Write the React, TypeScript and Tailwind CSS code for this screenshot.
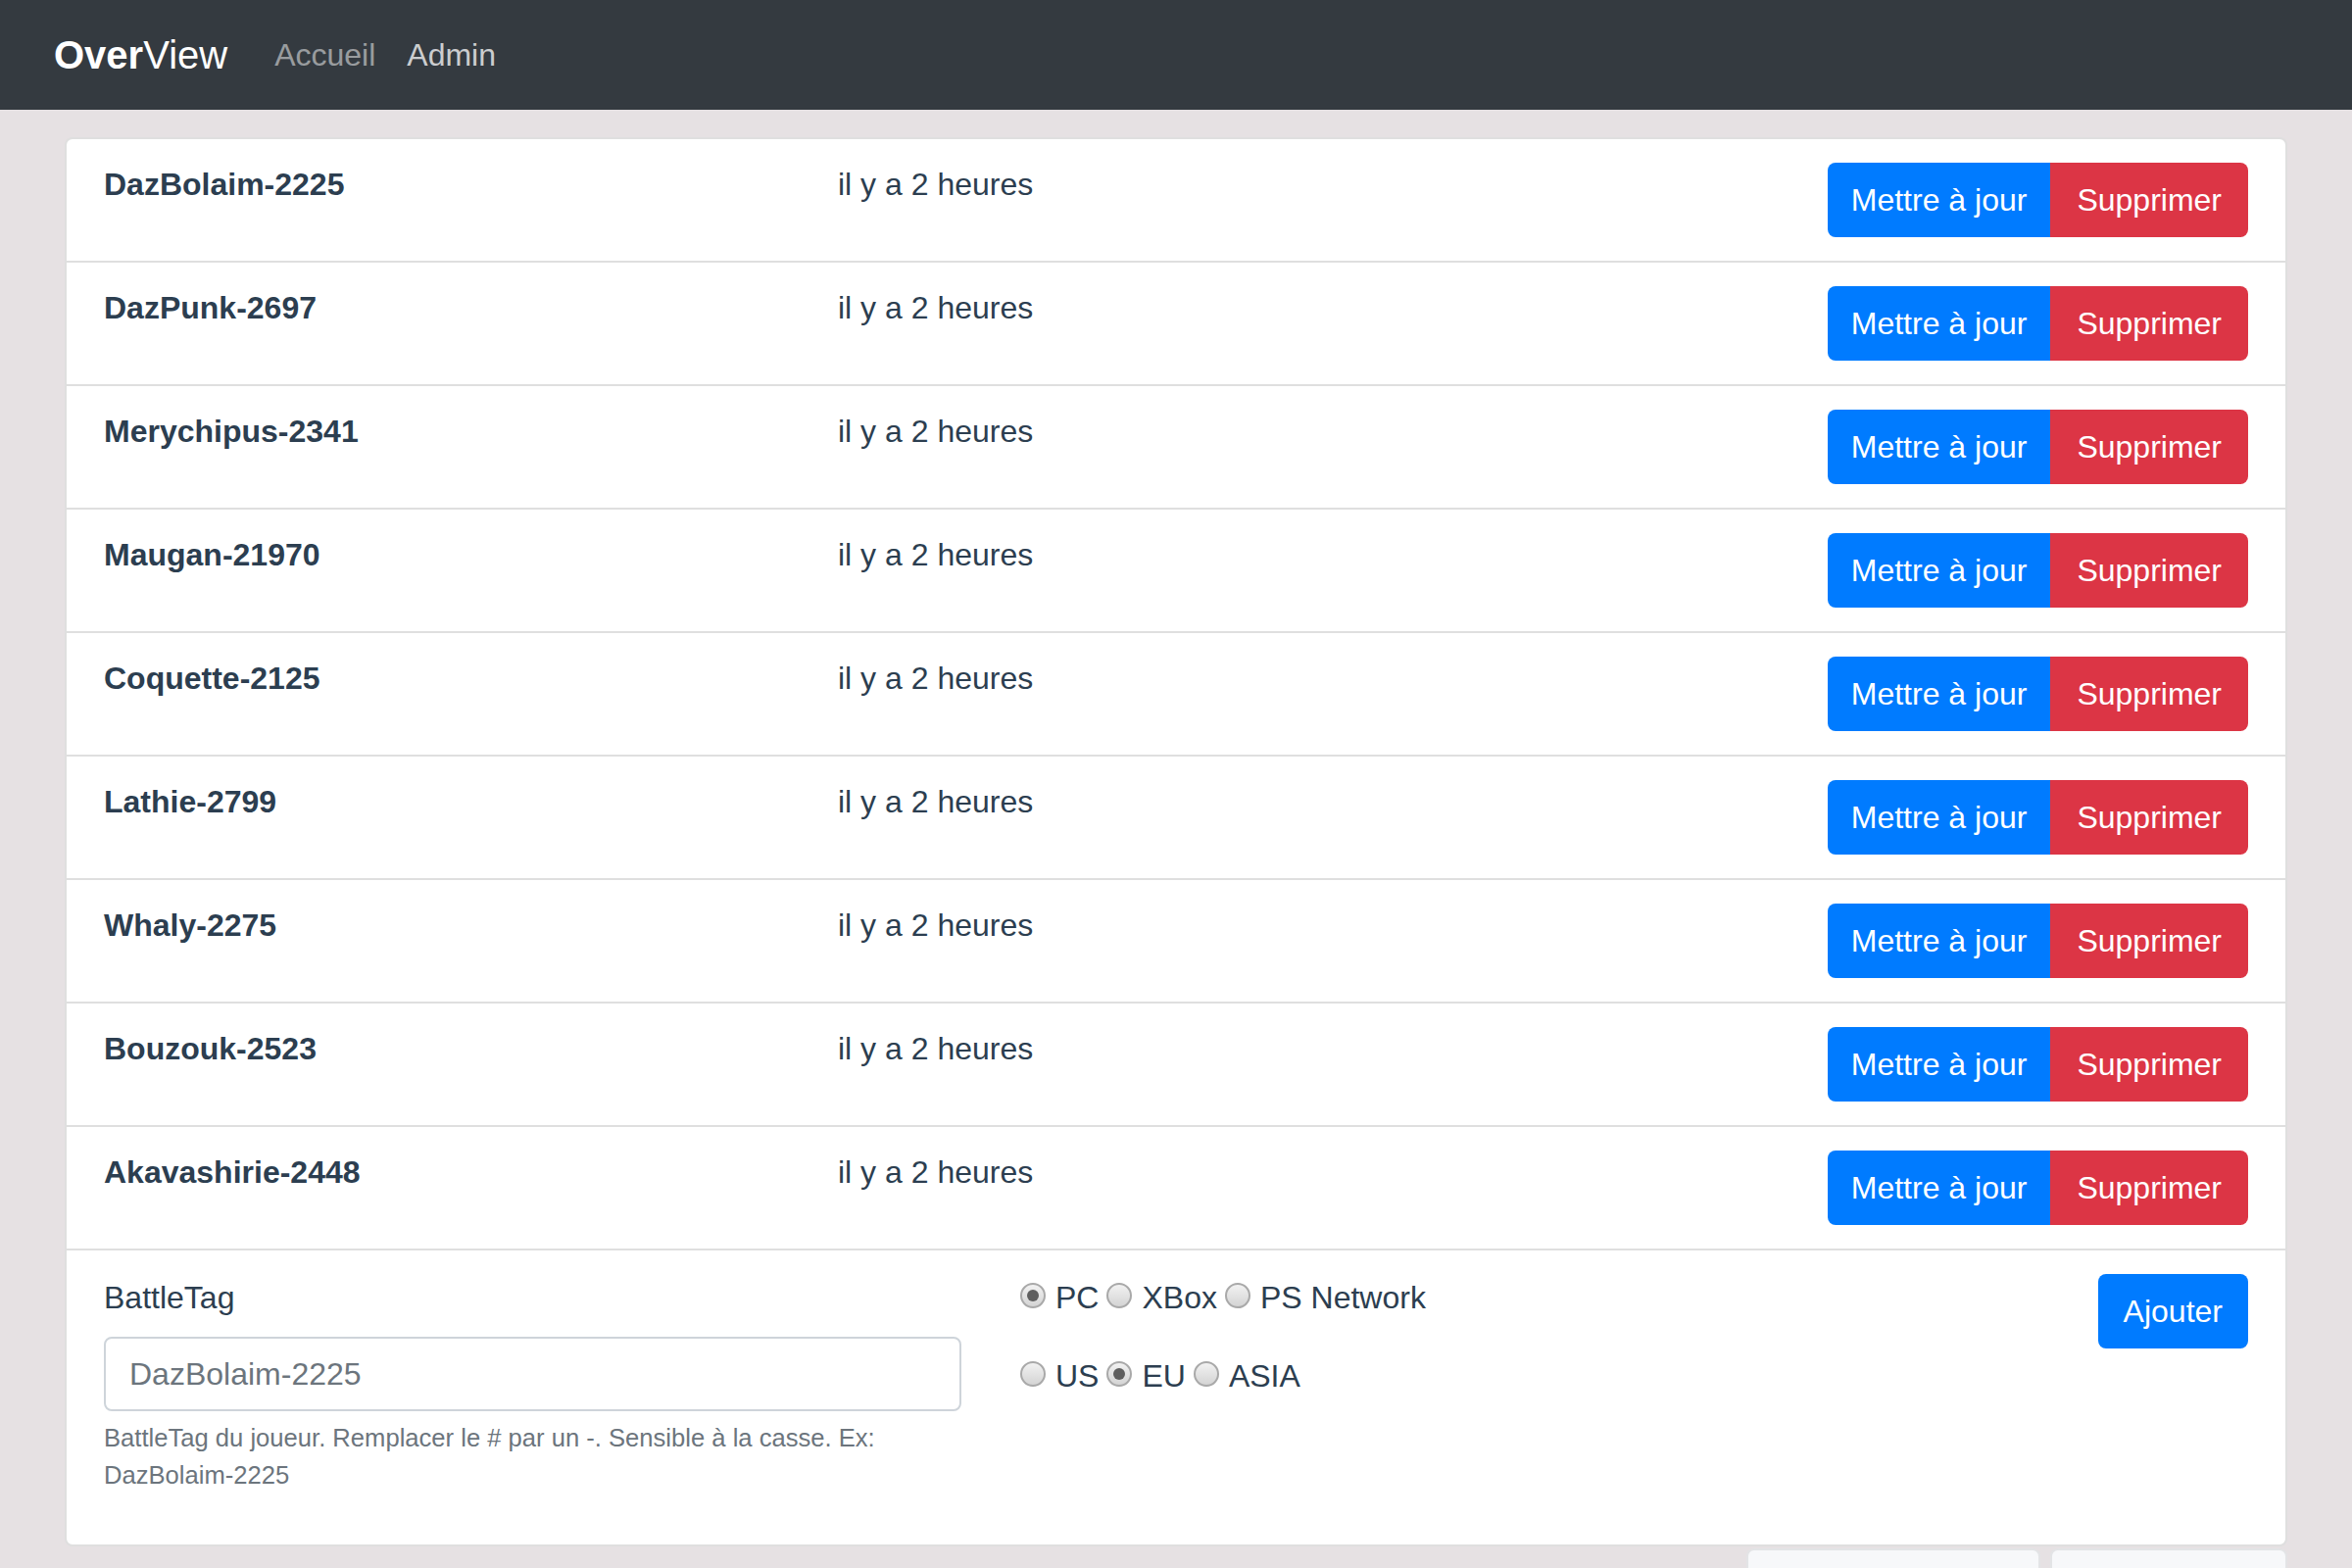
import { useState } from 'react';

const players = [
  'DazBolaim-2225',
  'DazPunk-2697',
  'Merychipus-2341',
  'Maugan-21970',
  'Coquette-2125',
  'Lathie-2799',
  'Whaly-2275',
  'Bouzouk-2523',
  'Akavashirie-2448',
];

function Radio({ checked, label, onClick }: { checked: boolean; label: string; onClick: () => void }) {
  return (
    <button type="button" onClick={onClick} className="flex items-center mr-[8px]">
      <span className="flex h-[26px] w-[26px] items-center justify-center rounded-full border-2 border-[#a9a9a9] bg-linear-to-b from-[#f2f2f2] to-[#d4d4d4] -mt-[4px]">
        {checked && <span className="h-[12px] w-[12px] rounded-full bg-[#5f5f5f]" />}
      </span>
      <span className="ml-[10px]">{label}</span>
    </button>
  );
}

export default function App() {
  const [platform, setPlatform] = useState('PC');
  const [region, setRegion] = useState('EU');

  return (
    <div className="h-[1600px] overflow-hidden bg-[#e6e1e3] font-['Liberation_Sans',Arial,sans-serif] text-[32px] text-[#2c3e50]">
      <nav className="flex h-[112px] items-center bg-[#343a40] px-[55px]">
        <a href="#" className="mr-[32px] text-[40px] leading-[60px] text-white">
          <span className="font-bold">Over</span>View
        </a>
        <a href="#" className="px-[16px] leading-[48px] text-white/50">Accueil</a>
        <a href="#" className="px-[16px] leading-[48px] text-white/75">Admin</a>
      </nav>

      <main className="px-[66px] pt-[28px]">
        <div className="rounded-[8px] border-2 border-black/[.125] bg-white">
          {players.map((name) => (
            <div key={name} className="flex items-start border-b-2 border-black/[.125] px-[38px] py-[24px]">
              <div className="w-[749px] font-bold leading-[45px]">{name}</div>
              <div className="flex-1 leading-[45px]">il y a 2 heures</div>
              <div className="flex">
                <button className="h-[76px] rounded-l-[8px] bg-[#007bff] px-[24px] text-white">Mettre à jour</button>
                <button className="h-[76px] rounded-r-[8px] bg-[#dc3545] px-[27px] text-white">Supprimer</button>
              </div>
            </div>
          ))}

          <div className="flex items-start px-[38px] pt-[24px] pb-[51px]">
            <div className="w-[875px]">
              <label className="mb-[16px] block leading-[48px]">BattleTag</label>
              <input
                className="block h-[76px] w-full rounded-[8px] border-2 border-[#ced4da] px-[24px] text-[32px] outline-none placeholder:text-[#6c757d]"
                placeholder="DazBolaim-2225"
              />
              <p className="mt-[8px] text-[25.6px] leading-[38.4px] text-[#6c757d]">
                BattleTag du joueur. Remplacer le # par un -. Sensible à la casse. Ex: DazBolaim-2225
              </p>
            </div>
            <div className="ml-[60px] flex-1">
              <div className="flex h-[48px] items-center">
                {['PC', 'XBox', 'PS Network'].map((p) => (
                  <Radio key={p} label={p} checked={platform === p} onClick={() => setPlatform(p)} />
                ))}
              </div>
              <div className="mt-[32px] flex h-[48px] items-center">
                {['US', 'EU', 'ASIA'].map((r) => (
                  <Radio key={r} label={r} checked={region === r} onClick={() => setRegion(r)} />
                ))}
              </div>
            </div>
            <button className="h-[76px] rounded-[8px] bg-[#007bff] px-[26px] text-white">Ajouter</button>
          </div>
        </div>

        <div className="mt-[2px] flex justify-end gap-[10px]">
          <div className="h-[80px] w-[300px] rounded-t-[8px] border-2 border-black/[.08] bg-[#f7f8fa]" />
          <div className="h-[80px] w-[242px] rounded-t-[8px] border-2 border-black/[.08] bg-[#f7f8fa]" />
        </div>
      </main>
    </div>
  );
}
